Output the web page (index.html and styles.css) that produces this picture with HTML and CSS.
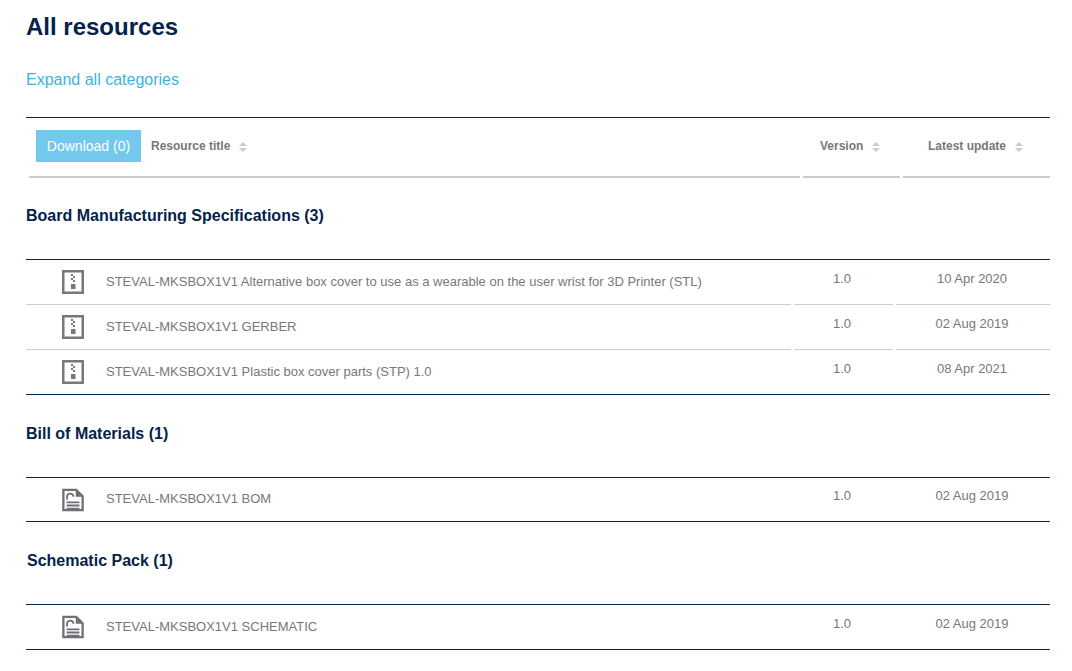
FILE: index.html
```html
<!DOCTYPE html>
<html lang="en">
<head>
<meta charset="utf-8">
<title>All resources</title>
<link rel="stylesheet" href="styles.css">
</head>
<body>
<svg class="defs" width="0" height="0" aria-hidden="true">
  <symbol id="zip" viewBox="0 0 22 24">
    <path d="M1.250 1.250h19.500v21.500H1.250z" fill="none" stroke="#77777d" stroke-width="2.500"/>
    <path d="M9 4h2v2H9zM11 6h2v2h-2zM9 8h2v2H9zM11 10h2v2h-2zM9 14h4.500v5H9z" fill="#77777d"/>
  </symbol>
  <symbol id="doc" viewBox="0 0 24 25">
    <path d="M1.500 1.500h14l7 7v15h-21z" fill="none" stroke="#6f6f75" stroke-width="2.500"/>
    <path d="M15 1v8h8z" fill="#6f6f75"/>
    <path d="M5 14h14v2H5zM5 17.500h14v2H5zM5 21h14v1.500H5z" fill="#6f6f75"/>
    <path d="M5.500 12V9a3.500 3.500 0 0 1 7 0" fill="none" stroke="#6f6f75" stroke-width="2"/>
  </symbol>
</svg>
<main class="page">
  <h1 class="title">All resources</h1>
  <a class="expand" href="#">Expand all categories</a>

  <div class="head">
    <div class="head-cell head-main">
      <button class="download">Download (0)</button>
      <span class="sort">Resource title<i class="arrows"></i></span>
    </div>
    <div class="head-cell head-version"><span class="sort">Version<i class="arrows"></i></span></div>
    <div class="head-cell head-date"><span class="sort">Latest update<i class="arrows"></i></span></div>
  </div>

  <h2 class="cat">Board Manufacturing Specifications (3)</h2>
  <div class="rows">
    <div class="row">
      <div class="c-main"><svg class="ico"><use href="#zip"/></svg><span class="name">STEVAL-MKSBOX1V1 Alternative box cover to use as a wearable on the user wrist for 3D Printer (STL)</span></div>
      <div class="c-ver">1.0</div><div class="c-date">10 Apr 2020</div>
    </div>
    <div class="row">
      <div class="c-main"><svg class="ico"><use href="#zip"/></svg><span class="name">STEVAL-MKSBOX1V1 GERBER</span></div>
      <div class="c-ver">1.0</div><div class="c-date">02 Aug 2019</div>
    </div>
    <div class="row">
      <div class="c-main"><svg class="ico"><use href="#zip"/></svg><span class="name">STEVAL-MKSBOX1V1 Plastic box cover parts (STP) 1.0</span></div>
      <div class="c-ver">1.0</div><div class="c-date">08 Apr 2021</div>
    </div>
  </div>

  <h2 class="cat">Bill of Materials (1)</h2>
  <div class="rows rows-short">
    <div class="row">
      <div class="c-main"><svg class="ico"><use href="#doc"/></svg><span class="name">STEVAL-MKSBOX1V1 BOM</span></div>
      <div class="c-ver">1.0</div><div class="c-date">02 Aug 2019</div>
    </div>
  </div>

  <h2 class="cat cat-shift">Schematic Pack (1)</h2>
  <div class="rows">
    <div class="row">
      <div class="c-main"><svg class="ico"><use href="#doc"/></svg><span class="name">STEVAL-MKSBOX1V1 SCHEMATIC</span></div>
      <div class="c-ver">1.0</div><div class="c-date">02 Aug 2019</div>
    </div>
  </div>
</main>
</body>
</html>
```
FILE: styles.css
```css
* { box-sizing: border-box; }
html, body { margin: 0; padding: 0; background: #fff; }
body { font-family: "Liberation Sans", Arial, sans-serif; color: #77777d; overflow: hidden; }
.defs { position: absolute; }
.page { width: 1072px; height: 671px; padding: 13px 22px 0 26px; }

.title { margin: 0; font-size: 24px; line-height: 28px; font-weight: 700; color: #03234b; }
.expand { display: block; margin-top: 29px; font-size: 16px; line-height: 20px; color: #3cb4e0; text-decoration: none; }

.head { display: flex; gap: 3px; height: 60px; margin-top: 27px; padding-left: 3px; border-top: 1px solid #03234b; }
.head-cell { display: flex; align-items: center; border-bottom: 2px solid #cccccf; height: 60px; padding-bottom: 3px; font-size: 12px; font-weight: 700; }
.head-main { width: 771px; padding-left: 7px; }
.head-version { width: 97px; padding-left: 17px; }
.head-date { width: 147px; padding-left: 25px; }
.download { width: 105px; height: 32px; margin-right: 10px; padding: 0; border: 0; background: #73c9ed; color: #fff; font: 400 14px "Liberation Sans", Arial, sans-serif; }
.sort { display: inline-flex; align-items: center; }
.arrows { display: inline-flex; flex-direction: column; gap: 2px; margin-left: 9px; margin-top: 2px; }
.arrows::before, .arrows::after { content: ""; width: 0; height: 0; border-left: 4px solid transparent; border-right: 4px solid transparent; }
.arrows::before { border-bottom: 4px solid #cccccf; }
.arrows::after { border-top: 4px solid #cccccf; }

.cat { margin: 0; height: 82px; padding-top: 29px; font-size: 16px; line-height: 20px; font-weight: 700; color: #03234b; }
.cat-shift { padding-left: 1px; }

.rows { border-top: 1px solid #03234b; border-bottom: 1px solid #03234b; }
.row { display: flex; gap: 3px; height: 45px; font-size: 13px; }
.c-main, .c-ver, .c-date { height: 45px; border-bottom: 1px solid #cccccf; }
.row:last-child { height: 44px; }
.row:last-child .c-main, .row:last-child .c-ver, .row:last-child .c-date { height: 44px; border-bottom: 0; }
.rows-short .row:last-child, .rows-short .row:last-child .c-main, .rows-short .row:last-child .c-ver, .rows-short .row:last-child .c-date { height: 43px; }
.c-main { width: 765px; display: flex; align-items: center; padding-left: 36px; }
.name { margin-bottom: 2px; }
.c-ver { width: 99px; padding-right: 3px; text-align: center; line-height: 37px; }
.c-date { width: 154px; padding-right: 2px; text-align: center; line-height: 37px; }
.rows-short .c-ver, .rows-short .c-date { line-height: 35px; }
.ico { display: block; flex: none; width: 22px; height: 24px; margin-right: 22px; }
```
